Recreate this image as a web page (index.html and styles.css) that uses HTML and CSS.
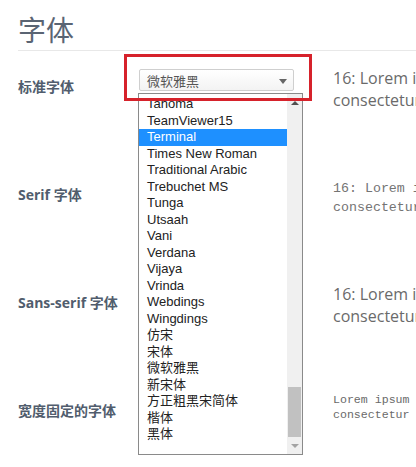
FILE: index.html
```html
<!DOCTYPE html>
<html lang="zh-CN">
<head>
  <meta charset="UTF-8" />
  <meta name="viewport" content="width=device-width, initial-scale=1" />
  <title>字体</title>
  <link rel="stylesheet" href="styles.css">
</head>
<body>
  <main class="page">
    <h1 class="page-title">字体</h1>

    <div class="font-rows">
      <!-- Standard font, with its open picker -->
      <div class="font-row">
        <div class="font-label">标准字体</div>
        <div class="font-control">
          <div class="picker">
            <div class="picker-box">
              <span class="picker-value">微软雅黑</span>
              <span class="picker-arrow"></span>
            </div>
            <div class="picker-list">
              <ul class="picker-items">
                <li>Tahoma</li>
                <li>TeamViewer15</li>
                <li class="selected">Terminal</li>
                <li>Times New Roman</li>
                <li>Traditional Arabic</li>
                <li>Trebuchet MS</li>
                <li>Tunga</li>
                <li>Utsaah</li>
                <li>Vani</li>
                <li>Verdana</li>
                <li>Vijaya</li>
                <li>Vrinda</li>
                <li>Webdings</li>
                <li>Wingdings</li>
                <li>仿宋</li>
                <li>宋体</li>
                <li>微软雅黑</li>
                <li>新宋体</li>
                <li>方正粗黑宋简体</li>
                <li>楷体</li>
                <li>黑体</li>
              </ul>
              <div class="picker-scroll">
                <div class="scroll-btn"><span class="tri-up"></span></div>
                <div class="scroll-track"><div class="scroll-thumb"></div></div>
                <div class="scroll-btn"><span class="tri-down"></span></div>
              </div>
            </div>
            <div class="callout"></div>
          </div>
        </div>
        <div class="font-sample sample-sans">
          <span>16: Lorem ipsum dolor sit amet,</span>
          <span>consectetur adipiscing elit.</span>
        </div>
      </div>

      <div class="font-row">
        <div class="font-label">Serif 字体</div>
        <div class="font-control"></div>
        <div class="font-sample sample-serif">
          <span>16: Lorem ipsum dolor sit amet,</span>
          <span>consectetur adipiscing elit.</span>
        </div>
      </div>

      <div class="font-row">
        <div class="font-label">Sans-serif 字体</div>
        <div class="font-control"></div>
        <div class="font-sample sample-sans">
          <span>16: Lorem ipsum dolor sit amet,</span>
          <span>consectetur adipiscing elit.</span>
        </div>
      </div>

      <div class="font-row">
        <div class="font-label">宽度固定的字体</div>
        <div class="font-control"></div>
        <div class="font-sample sample-fixed">
          <span>Lorem ipsum dolor sit amet,</span>
          <span>consectetur adipiscing elit.</span>
        </div>
      </div>
    </div>
  </main>
</body>
</html>
```

FILE: styles.css
```css
* {
  box-sizing: border-box;
}

body {
  margin: 0;
  background: #ffffff;
  font-family: "Open Sans", "Noto Sans CJK SC", sans-serif;
  overflow: hidden;
}

.page {
  padding-left: 18px;
}

.page-title {
  margin: 0;
  padding: 13px 0 3px;
  font-size: 28px;
  line-height: 34px;
  font-weight: 400;
  color: #5a6473;
  border-bottom: 1px solid #e8e8e8;
}

.font-rows {
  margin-top: 5px;
}

.font-row {
  display: grid;
  grid-template-columns: 120px 195px 1fr;
  height: 108px;
}

.font-label {
  padding-top: 21px;
  font-size: 14px;
  line-height: 20px;
  font-weight: 700;
  color: #515d6d;
  white-space: nowrap;
}

.font-control {
  position: relative;
}

.font-sample {
  display: flex;
  flex-direction: column;
  white-space: nowrap;
}

.sample-sans {
  padding-top: 11px;
  font-family: "Open Sans", sans-serif;
  font-size: 16px;
  line-height: 22px;
  color: #6a6a6a;
}

.sample-serif {
  padding-top: 15px;
  font-family: "Liberation Mono", monospace;
  font-size: 13.3px;
  line-height: 19px;
  color: #747474;
}

.sample-fixed {
  padding-top: 12px;
  font-family: "Liberation Mono", monospace;
  font-size: 11.6px;
  line-height: 15px;
  color: #6a6a6a;
}

/* select box + open list */
.picker {
  position: relative;
  margin: 13px 0 0 1px;
  width: 155px;
}

.picker-box {
  display: flex;
  align-items: center;
  justify-content: space-between;
  height: 22px;
  padding: 0 6px 0 7px;
  border: 1px solid #cfcfcf;
  border-radius: 2px;
  background: linear-gradient(#ffffff, #f3f3f3);
}

.picker-value {
  font-family: "Noto Sans CJK SC", sans-serif;
  font-size: 13px;
  color: #555555;
}

.picker-arrow {
  width: 0;
  height: 0;
  margin-top: 2px;
  border-left: 4px solid transparent;
  border-right: 4px solid transparent;
  border-top: 5px solid #666666;
}

.picker-list {
  position: absolute;
  top: 24px;
  left: -1px;
  width: 165px;
  height: 362px;
  display: flex;
  border: 1px solid #8a8a8a;
  background: #ffffff;
  z-index: 1;
}

.picker-items {
  flex: 1;
  margin: 0;
  padding: 2px 0 0;
  list-style: none;
  overflow: hidden;
}

.picker-items li {
  height: 16.5px;
  padding-left: 8px;
  font-family: "Liberation Sans", "Noto Sans CJK SC", sans-serif;
  font-size: 13px;
  line-height: 16.5px;
  color: #222222;
  white-space: nowrap;
}

.picker-items li.selected {
  background: #1e90ff;
  color: #ffffff;
}

.picker-scroll {
  width: 15px;
  display: flex;
  flex-direction: column;
  background: #f0f0f0;
}

.scroll-btn {
  height: 17px;
  display: flex;
  align-items: center;
  justify-content: center;
}

.scroll-track {
  flex: 1;
}

.scroll-thumb {
  margin: 276px 1px 0;
  height: 50px;
  background: #c1c1c1;
}

.tri-up {
  width: 0;
  height: 0;
  border-left: 4px solid transparent;
  border-right: 4px solid transparent;
  border-bottom: 4px solid #505050;
}

.tri-down {
  width: 0;
  height: 0;
  border-left: 4px solid transparent;
  border-right: 4px solid transparent;
  border-top: 4px solid #a3a3a3;
}

/* red highlight frame drawn over the control */
.callout {
  position: absolute;
  top: -15px;
  left: -15px;
  width: 188px;
  height: 47px;
  border: 3px solid #d6222b;
  pointer-events: none;
  z-index: 2;
}
```
